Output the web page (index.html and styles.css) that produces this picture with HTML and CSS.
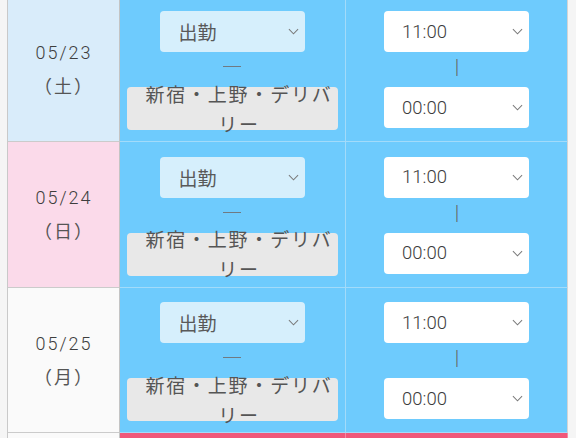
FILE: index.html
```html
<!DOCTYPE html>
<html lang="ja">
<head>
<meta charset="utf-8">
<link rel="stylesheet" href="styles.css">
</head>
<body>
<div class="page">
  <div class="sheet">
    <div class="date sat"><div>05/23</div><div class="dow">（土）</div></div>
    <div class="cell status">
      <div class="sel light"><span>出勤</span><svg class="chev" viewBox="0 0 12 7"><polyline points="1,1 6,6 11,1"/></svg></div>
      <div class="dash"><span class="dash-line"></span></div>
      <div class="area"><span class="area-text">新宿・上野・デリバリー</span></div>
    </div>
    <div class="cell time">
      <div class="sel white"><span>11:00</span><svg class="chev" viewBox="0 0 12 7"><polyline points="1,1 6,6 11,1"/></svg></div>
      <div class="bar">|</div>
      <div class="sel white"><span>00:00</span><svg class="chev" viewBox="0 0 12 7"><polyline points="1,1 6,6 11,1"/></svg></div>
    </div>

    <div class="date sun"><div>05/24</div><div class="dow">（日）</div></div>
    <div class="cell status">
      <div class="sel light"><span>出勤</span><svg class="chev" viewBox="0 0 12 7"><polyline points="1,1 6,6 11,1"/></svg></div>
      <div class="dash"><span class="dash-line"></span></div>
      <div class="area"><span class="area-text">新宿・上野・デリバリー</span></div>
    </div>
    <div class="cell time">
      <div class="sel white"><span>11:00</span><svg class="chev" viewBox="0 0 12 7"><polyline points="1,1 6,6 11,1"/></svg></div>
      <div class="bar">|</div>
      <div class="sel white"><span>00:00</span><svg class="chev" viewBox="0 0 12 7"><polyline points="1,1 6,6 11,1"/></svg></div>
    </div>

    <div class="date wkd"><div>05/25</div><div class="dow">（月）</div></div>
    <div class="cell status">
      <div class="sel light"><span>出勤</span><svg class="chev" viewBox="0 0 12 7"><polyline points="1,1 6,6 11,1"/></svg></div>
      <div class="dash"><span class="dash-line"></span></div>
      <div class="area"><span class="area-text">新宿・上野・デリバリー</span></div>
    </div>
    <div class="cell time">
      <div class="sel white"><span>11:00</span><svg class="chev" viewBox="0 0 12 7"><polyline points="1,1 6,6 11,1"/></svg></div>
      <div class="bar">|</div>
      <div class="sel white"><span>00:00</span><svg class="chev" viewBox="0 0 12 7"><polyline points="1,1 6,6 11,1"/></svg></div>
    </div>

    <div class="date wkd last"></div>
    <div class="cell off last"></div>
    <div class="cell off last"></div>
  </div>
</div>
</body>
</html>
```

FILE: styles.css
```css
html, body {
  margin: 0;
  padding: 0;
  background: #f5f5f5;
  overflow: hidden;
}
body {
  width: 576px;
  height: 438px;
  font-family: Roboto, "Noto Sans CJK JP", sans-serif;
  font-weight: 300;
  color: #444;
}
.page {
  padding-left: 7px;
}
.sheet {
  margin-top: -3.5px;
  width: 560px;
  display: grid;
  grid-template-columns: 112px 226px 222px;
  grid-template-rows: 145.5px 145.5px 145.5px 8px;
  border-left: 1px solid #c9c9c9;
}
.date {
  box-sizing: border-box;
  border-right: 1px solid #c4c4c4;
  border-bottom: 1px solid #cbcbcb;
  display: flex;
  flex-direction: column;
  justify-content: center;
  align-items: center;
  font-size: 18px;
  letter-spacing: 2px;
  line-height: 33px;
  color: #3e3e3e;
  padding-left: 1px;
}
.dow {
  font-family: "Noto Sans CJK JP", sans-serif;
  font-weight: 400;
  color: #555;
}
.sat { background: #d9ecfa; }
.sun { background: #fbdaea; }
.wkd { background: #fafafa; }
.cell {
  box-sizing: border-box;
  background: #6ecbfd;
  border-right: 1px solid #a2dbfa;
  border-bottom: 1px solid #a2dbfa;
  display: flex;
  flex-direction: column;
  align-items: center;
  padding-top: 14.5px;
}
.cell.time {
  border-right: 1px solid #d4d4d4;
}
.cell.off {
  background: #f0587a;
  border-right: 1px solid #f58aa2;
}
.last {
  border-bottom: none;
}
.sel {
  box-sizing: border-box;
  width: 145px;
  height: 41px;
  border-radius: 4px;
  display: flex;
  align-items: center;
  justify-content: space-between;
  padding: 0 6px 0 18px;
  font-size: 18.5px;
  color: #3c3c3c;
}
.sel.light {
  background: #d6effc;
  color: #595959;
  padding-left: 19px;
  font-size: 19px;
  font-family: "Noto Sans CJK JP", sans-serif;
  font-weight: 400;
  margin-left: -1px;
}
.sel.white {
  background: #ffffff;
}
.chev {
  width: 11px;
  height: 7px;
  fill: none;
  stroke: #7a7a7a;
  stroke-width: 1.1;
}
.dash {
  height: 35px;
  display: flex;
  justify-content: center;
  align-items: flex-start;
  box-sizing: border-box;
  padding-top: 14px;
  margin-left: -1px;
}
.dash-line {
  display: block;
  width: 18px;
  height: 1px;
  background: #707a82;
}
.bar {
  height: 35px;
  display: flex;
  align-items: center;
  justify-content: center;
  box-sizing: border-box;
  padding-bottom: 5px;
  font-size: 20px;
  color: #666;
  font-weight: 300;
  margin-left: 1px;
}
.area {
  box-sizing: border-box;
  width: 211px;
  height: 43px;
  background: #e8e8e8;
  border-radius: 4px;
  display: flex;
  align-items: center;
  justify-content: center;
  padding: 0 4px 0 18px;
  margin-left: -1px;
}
.area-text {
  font-family: "Noto Sans CJK JP", sans-serif;
  font-weight: 400;
  font-size: 19px;
  letter-spacing: 1.8px;
  line-height: 30px;
  text-align: center;
  color: #555;
}
```
